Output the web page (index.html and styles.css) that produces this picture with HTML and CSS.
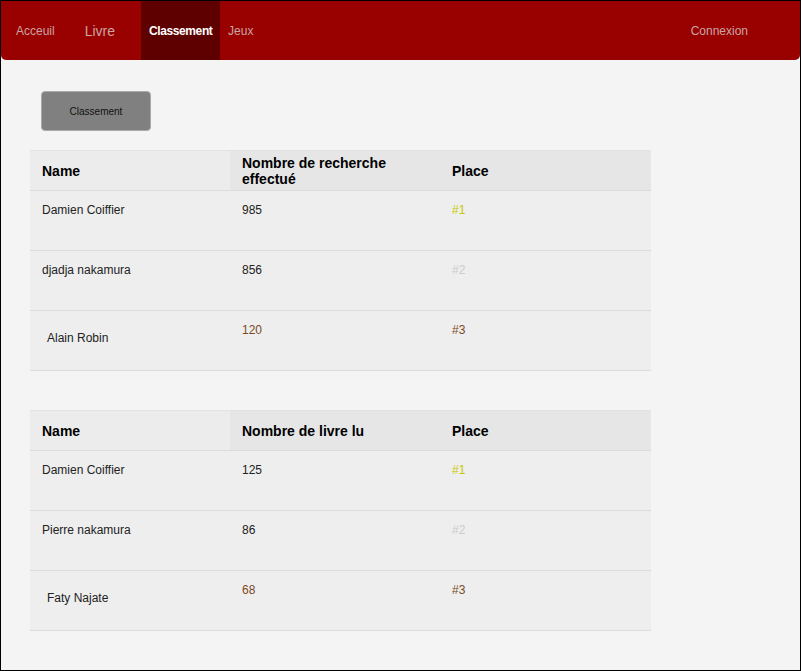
FILE: index.html
```html
<!DOCTYPE html>
<html lang="fr">
<head>
<meta charset="utf-8">
<title>Classement</title>
<link rel="stylesheet" href="styles.css">
</head>
<body>
<div class="frame">
  <nav class="nav">
    <a class="nav-link first">Acceuil</a>
    <a class="nav-link big gap-a">Livre</a>
    <a class="nav-link active gap-b">Classement</a>
    <a class="nav-link">Jeux</a>
    <a class="nav-link right">Connexion</a>
  </nav>
  <main class="main">
    <button class="btn">Classement</button>
    <table class="rank">
      <thead>
        <tr><th class="c1">Name</th><th class="c2">Nombre de recherche effectué</th><th class="c3">Place</th></tr>
      </thead>
      <tbody>
        <tr><td>Damien Coiffier</td><td>985</td><td class="gold">#1</td></tr>
        <tr><td>djadja nakamura</td><td>856</td><td class="silver">#2</td></tr>
        <tr><td class="low"><span class="indent">Alain Robin</span></td><td class="bronze">120</td><td class="bronze">#3</td></tr>
      </tbody>
    </table>
    <table class="rank second">
      <thead>
        <tr><th class="c1">Name</th><th class="c2">Nombre de livre lu</th><th class="c3">Place</th></tr>
      </thead>
      <tbody>
        <tr><td>Damien Coiffier</td><td>125</td><td class="gold">#1</td></tr>
        <tr><td>Pierre nakamura</td><td>86</td><td class="silver">#2</td></tr>
        <tr><td class="low"><span class="indent">Faty Najate</span></td><td class="bronze">68</td><td class="bronze">#3</td></tr>
      </tbody>
    </table>
  </main>
</div>
</body>
</html>
```
FILE: styles.css
```css
html, body {
  margin: 0;
  padding: 0;
  background: #f4f4f4;
  font-family: "Liberation Sans", Arial, sans-serif;
}
.frame {
  box-sizing: border-box;
  width: 801px;
  height: 671px;
  border: 1px solid #000;
  background: #f4f4f4;
  overflow: hidden;
}
.nav {
  display: flex;
  align-items: stretch;
  height: 59px;
  background: #990000;
  border-radius: 0 0 5px 5px;
  padding-left: 7px;
  padding-right: 44px;
}
.nav-link {
  display: flex;
  align-items: center;
  padding: 0 8px;
  font-size: 12px;
  color: #c9a5a5;
}
.nav-link.big { font-size: 14px; }
.gap-a { margin-left: 14px; }
.gap-b { margin-left: 18px; }
.nav-link.active {
  box-sizing: border-box;
  width: 79px;
  background: #5e0000;
  color: #fff;
  font-weight: bold;
  letter-spacing: -0.4px;
  white-space: nowrap;
}
.nav-link.right { margin-left: auto; }
.main {
  padding: 31px 0 0 29px;
}
.btn {
  display: block;
  margin-left: 11px;
  width: 110px;
  height: 40px;
  background: #808080;
  border: 1px solid #a9a9a9;
  border-radius: 4px;
  font-family: "Liberation Sans", Arial, sans-serif;
  font-size: 10px;
  color: #111;
  padding: 0;
}
.rank {
  margin-top: 19px;
  width: 621px;
  border-collapse: collapse;
  background: #eeeeee;
  border-top: 1px solid #e2e2e2;
}
.rank.second { margin-top: 39px; }
.rank th {
  height: 38px;
  padding: 0 12px;
  text-align: left;
  font-size: 14px;
  font-weight: bold;
  color: #000;
  line-height: 16px;
  background: #e6e6e6;
  border-bottom: 1px solid #dcdcdc;
}
.rank th.c1 { width: 176px; background: #ececec; }
.rank th.c2 { width: 186px; padding-top: 1px; }
.rank td {
  height: 60px;
  padding: 12px 12px 0;
  vertical-align: top;
  font-size: 12px;
  line-height: 14px;
  color: #222;
  border-bottom: 1px solid #dcdcdc;
  box-sizing: border-box;
}
.rank td.low { padding-top: 20px; }
.indent { padding-left: 5px; }
.rank td.gold { color: #c8c800; }
.rank td.silver { color: #cccccc; }
.rank td.bronze { color: #7a4a1e; }
```
